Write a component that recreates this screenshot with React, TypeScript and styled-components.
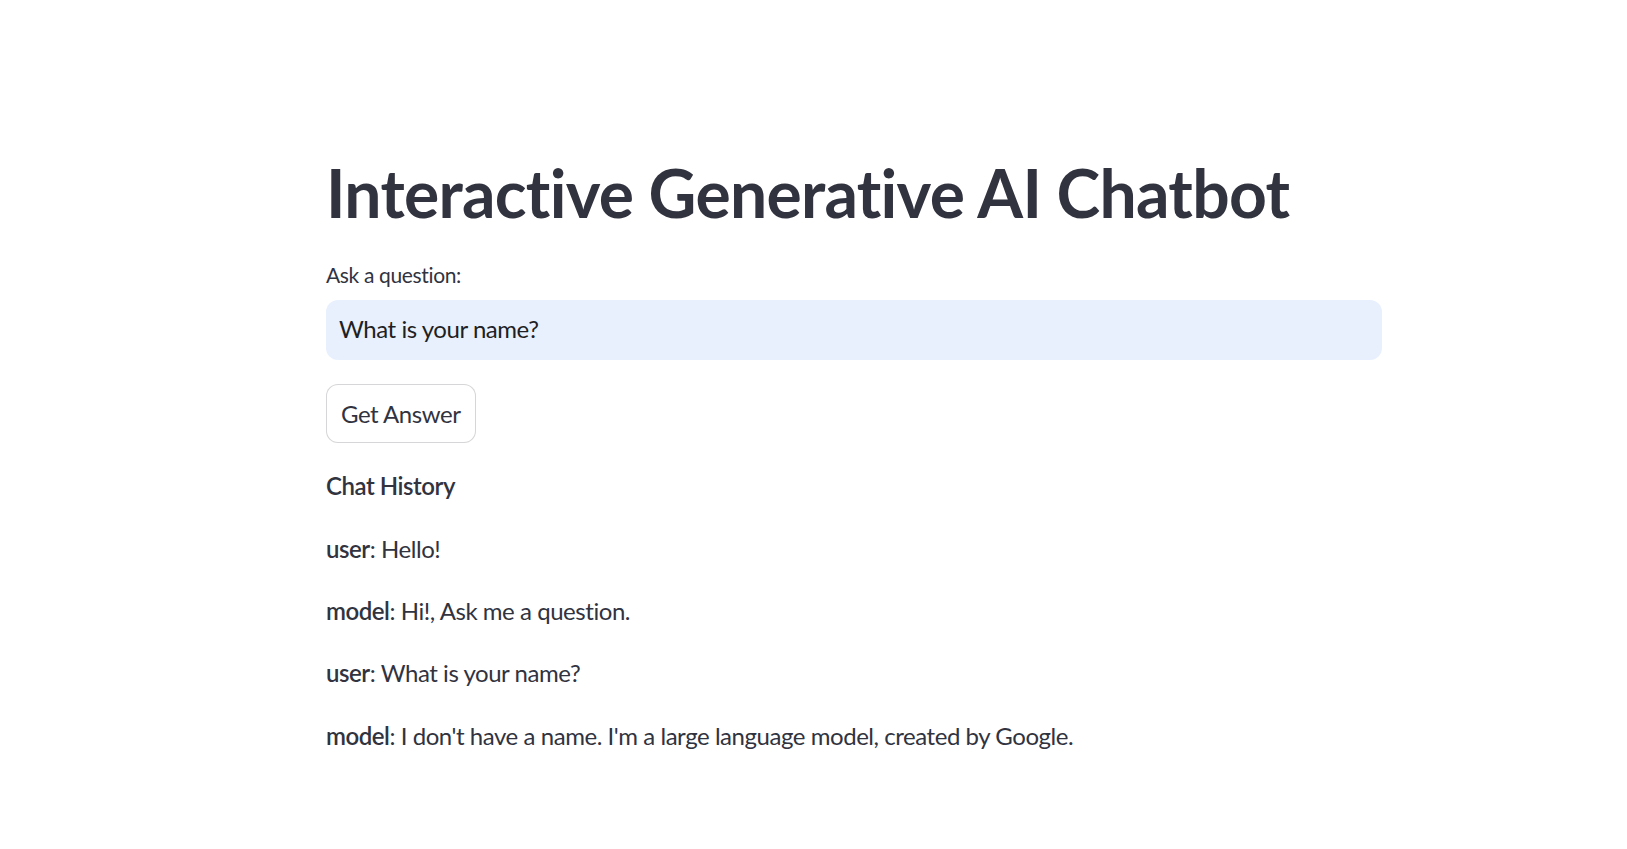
import React from "react";
import styled, { createGlobalStyle } from "styled-components";

const FONT = `Lato, "Noto Sans", sans-serif`;

const Global = createGlobalStyle`
  html, body { margin: 0; padding: 0; background: #ffffff; }
  body { font-family: ${FONT}; color: #31333f; }
  * { box-sizing: border-box; }
`;

const Main = styled.main`
  padding: 123px 0 80px 326px;
`;

const Column = styled.div`
  width: 1056px;
  display: flex;
  flex-direction: column;
  gap: 24px;
`;

const Title = styled.h1`
  margin: 0;
  padding: 30px 0 0;
  font-size: 66px;
  line-height: 1.2;
  font-weight: 700;
  letter-spacing: -0.72px;
  color: #31333f;
`;

const Field = styled.div`
  display: flex;
  flex-direction: column;
`;

const Label = styled.label`
  height: 44px;
  font-size: 21px;
  line-height: 38px;
  letter-spacing: -0.35px;
  color: #31333f;
`;

const InputBox = styled.div`
  height: 60px;
  border-radius: 12px;
  background: #e8f0fe;
  display: flex;
  align-items: center;
  padding: 0 13px 3px;
  font-size: 24px;
  letter-spacing: -0.45px;
  color: #1f1f24;
`;

const Button = styled.button`
  align-self: flex-start;
  height: 59px;
  padding: 0 14px;
  border: 1px solid rgba(49, 51, 63, 0.2);
  border-radius: 12px;
  background: #ffffff;
  font-family: ${FONT};
  font-size: 24px;
  letter-spacing: -0.45px;
  color: #31333f;
`;

const History = styled.div`
  display: flex;
  flex-direction: column;
`;

const Para = styled.p`
  margin: 0 0 24px;
  font-size: 24px;
  line-height: 38.4px;
  letter-spacing: -0.45px;
  color: #31333f;
`;

const Strong = styled.strong`
  font-weight: 600;
`;

const messages = [
  { role: "user", text: "Hello!" },
  { role: "model", text: "Hi!, Ask me a question." },
  { role: "user", text: "What is your name?" },
  { role: "model", text: "I don't have a name. I'm a large language model, created by Google." },
];

export default function App() {
  return (
    <>
      <Global />
      <Main>
        <Column>
          <Title>Interactive Generative AI Chatbot</Title>
          <Field>
            <Label>Ask a question:</Label>
            <InputBox>What is your name?</InputBox>
          </Field>
          <Button>Get Answer</Button>
          <History>
            <Para>
              <Strong>Chat History</Strong>
            </Para>
            {messages.map((m, i) => (
              <Para key={i}>
                <Strong>{m.role}</Strong>: {m.text}
              </Para>
            ))}
          </History>
        </Column>
      </Main>
    </>
  );
}
